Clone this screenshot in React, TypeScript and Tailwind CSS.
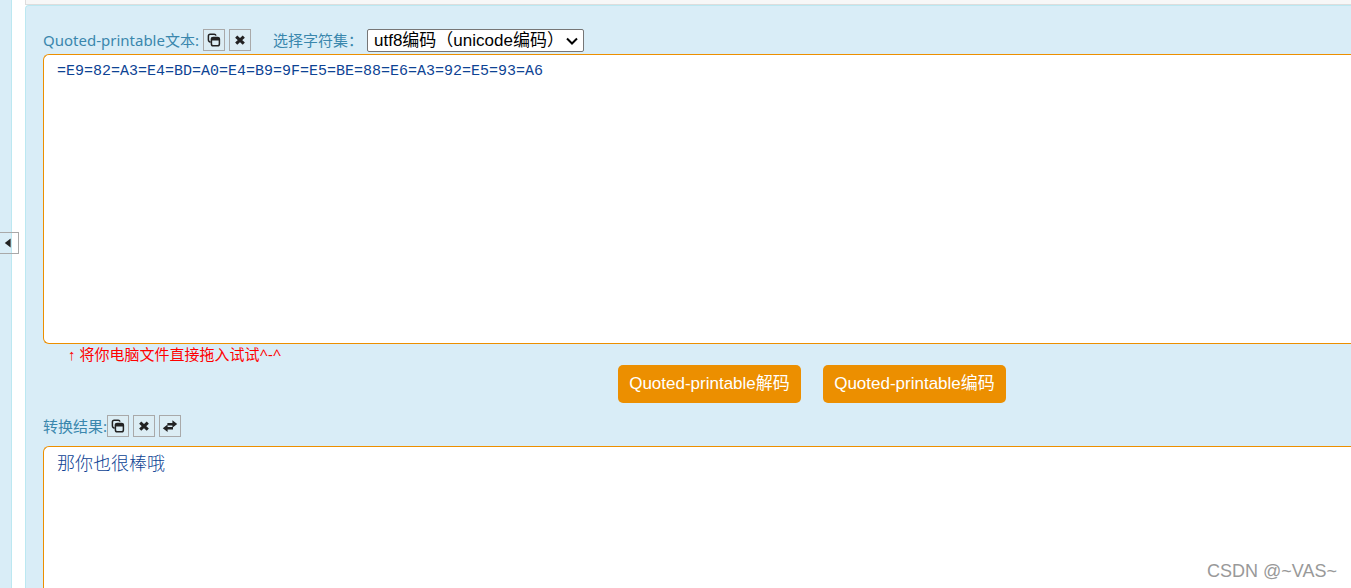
import React from "react";

const sans = "font-['Noto_Sans','Noto_Sans_CJK_SC',sans-serif]";
const arial = "font-['Liberation_Sans','Noto_Sans_CJK_SC',sans-serif]";

function CopyIcon() {
  return (
    <svg viewBox="0 0 14 14" className="h-3.5 w-3.5" fill="none" stroke="#222" strokeWidth="1.5" aria-hidden="true">
      <path d="M3.6 9.3 2.2 8.5a1.6 1.6 0 0 1-.8-1.4V3a1.8 1.8 0 0 1 1.8-1.8h4A1.9 1.9 0 0 1 9 2.6" />
      <rect x="4.4" y="4.4" width="8" height="8.4" rx="1.8" />
      <path d="M4.4 6h8" strokeWidth="3" />
    </svg>
  );
}

function ClearIcon() {
  return (
    <svg viewBox="0 0 14 14" className="h-3.5 w-3.5" aria-hidden="true">
      <path d="M3.2 3.6 10.8 10.6M10.8 3.6 3.2 10.6" stroke="#222" strokeWidth="3.1" />
    </svg>
  );
}

function SwapIcon() {
  return (
    <svg viewBox="0 0 16 14" className="h-3.5 w-4" fill="#222" aria-hidden="true">
      <path d="M10.4 1.2 15.2 5l-4.8 3.8V6.5H5.4V3.9h5z" />
      <path d="M5.6 5.4.8 9.2 5.6 13v-2.4H11V8H5.6z" />
    </svg>
  );
}

function IconButton({ label, children }: { label: string; children: React.ReactNode }) {
  return (
    <button
      type="button"
      aria-label={label}
      className="flex h-[22px] w-[22px] shrink-0 items-center justify-center border border-[#a9a9a9] bg-[#dcedf4]"
    >
      {children}
    </button>
  );
}

export default function App() {
  return (
    <div className={`relative flex h-screen overflow-hidden bg-white text-[15px] text-[#3a87ad] ${sans}`}>
      <aside className="w-3 shrink-0 border-r border-[#bce8f1] bg-[#d9edf7]">
        <button
          type="button"
          aria-label="展开"
          className="absolute top-[232px] left-0 flex h-[22px] w-[19px] items-center border border-l-0 border-[#a9a9a9] pl-1"
        >
          <svg viewBox="0 0 8 10" className="h-2.5 w-2" fill="#222" aria-hidden="true">
            <path d="M6.6.6v8.8L.8 5z" />
          </svg>
        </button>
      </aside>

      <main className="ml-[13px] flex min-w-0 flex-1 flex-col">
        <div className="h-[5px] shrink-0 border-b border-l border-[#ddd] bg-[#f7f7f7]" />
        <section className="flex min-h-0 flex-1 flex-col rounded-tl border-t border-l border-[#bce8f1] bg-[#d9edf7] pl-[17px]">
          <div className="mt-[23px] flex h-[25px] shrink-0 items-start">
            <label htmlFor="source" className="pr-1 leading-[22px]">Quoted-printable文本:</label>
            <div className="flex gap-1">
              <IconButton label="复制"><CopyIcon /></IconButton>
              <IconButton label="清空"><ClearIcon /></IconButton>
            </div>
            <label htmlFor="charset" className="ml-[22px] leading-[22px]">选择字符集：</label>
            <div className="relative ml-1">
              <select
                id="charset"
                className={`block h-[23px] w-[217px] appearance-none rounded-xs border border-[#767676] bg-white pl-1.5 text-[17px] leading-[20px] text-black ${arial}`}
              >
                <option>utf8编码（unicode编码）</option>
              </select>
              <svg
                viewBox="0 0 12 8"
                className="pointer-events-none absolute top-2 right-1.5 h-2 w-3"
                fill="none"
                stroke="#000"
                strokeWidth="2"
                aria-hidden="true"
              >
                <path d="m1 1.5 5 5 5-5" />
              </svg>
            </div>
          </div>

          <textarea
            id="source"
            spellCheck={false}
            defaultValue="=E9=82=A3=E4=BD=A0=E4=B9=9F=E5=BE=88=E6=A3=92=E5=93=A6"
            className="h-[290px] shrink-0 resize-none rounded-l-md border border-r-0 border-[#ec8f00] bg-white px-[13px] py-1 font-['Liberation_Mono','Noto_Sans_CJK_SC',monospace] text-[15px] leading-[26px] text-[#0d4394] outline-none"
          />
          <p className="ml-[25px] h-[21px] shrink-0 leading-[21px] text-[#f00]">
            <span className={arial}>↑</span> 将你电脑文件直接拖入试试^-^
          </p>

          <div className="flex shrink-0 justify-center gap-[22px] pl-[230px] text-white">
            <button type="button" className={`h-[38px] w-[183px] rounded-[5px] bg-[#ec8f00] text-[17px] whitespace-nowrap ${arial}`}>
              Quoted-printable解码
            </button>
            <button type="button" className={`h-[38px] w-[183px] rounded-[5px] bg-[#ec8f00] text-[17px] whitespace-nowrap ${arial}`}>
              Quoted-printable编码
            </button>
          </div>

          <div className="mt-3 flex h-[31px] shrink-0 items-start">
            <label htmlFor="result" className="leading-[22px]">转换结果:</label>
            <div className="flex gap-1">
              <IconButton label="复制结果"><CopyIcon /></IconButton>
              <IconButton label="清空结果"><ClearIcon /></IconButton>
              <IconButton label="交换"><SwapIcon /></IconButton>
            </div>
          </div>

          <textarea
            id="result"
            spellCheck={false}
            defaultValue="那你也很棒哦"
            className="min-h-0 flex-1 resize-none rounded-tl-md border border-r-0 border-b-0 border-[#ec8f00] bg-white px-[13px] py-0.5 font-['Noto_Sans_CJK_SC',sans-serif] text-[18px] leading-[26px] font-light text-[#0d4394] outline-none"
          />
        </section>
      </main>

      <span className={`absolute right-3.5 bottom-1 text-[18px] leading-[26px] text-[#999] ${arial}`}>CSDN @~VAS~</span>
    </div>
  );
}
